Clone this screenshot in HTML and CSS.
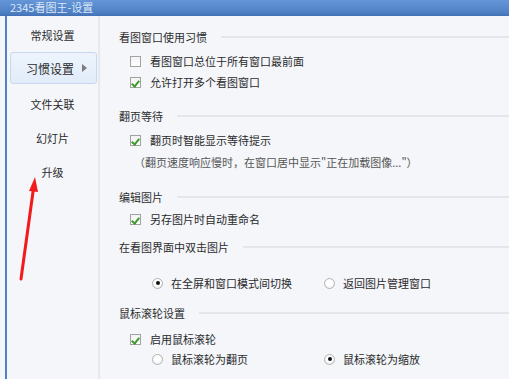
FILE: index.html
```html
<!DOCTYPE html>
<html lang="zh-CN">
<head>
<meta charset="utf-8">
<title>2345看图王-设置</title>
<link rel="stylesheet" href="styles.css">
</head>
<body>
<div class="window">
  <header class="titlebar">2345看图王-设置</header>
  <div class="main">
    <nav class="sidebar">
      <div class="nav-item">常规设置</div>
      <div class="nav-item active"><span>习惯设置</span><i class="caret"></i></div>
      <div class="nav-item gap">文件关联</div>
      <div class="nav-item">幻灯片</div>
      <div class="nav-item">升级</div>
    </nav>
    <div class="divider"></div>
    <div class="content">
      <section class="group g1">
        <div class="gtitle"><span>看图窗口使用习惯</span><i class="rule"></i></div>
        <label class="check"><i class="box"></i>看图窗口总位于所有窗口最前面</label>
        <label class="check c2"><i class="box on"></i>允许打开多个看图窗口</label>
      </section>
      <section class="group g2">
        <div class="gtitle"><span>翻页等待</span><i class="rule"></i></div>
        <label class="check"><i class="box on"></i>翻页时智能显示等待提示</label>
        <div class="note">（翻页速度响应慢时，在窗口居中显示"正在加载图像..."）</div>
      </section>
      <section class="group g3">
        <div class="gtitle"><span>编辑图片</span><i class="rule"></i></div>
        <label class="check"><i class="box on"></i>另存图片时自动重命名</label>
      </section>
      <section class="group g4">
        <div class="gtitle"><span>在看图界面中双击图片</span><i class="rule"></i></div>
        <div class="radios">
          <label class="radio"><i class="dot on"></i>在全屏和窗口模式间切换</label>
          <label class="radio"><i class="dot"></i>返回图片管理窗口</label>
        </div>
      </section>
      <section class="group g5">
        <div class="gtitle"><span>鼠标滚轮设置</span><i class="rule"></i></div>
        <label class="check"><i class="box on"></i>启用鼠标滚轮</label>
        <div class="radios r2">
          <label class="radio"><i class="dot"></i>鼠标滚轮为翻页</label>
          <label class="radio"><i class="dot on"></i>鼠标滚轮为缩放</label>
        </div>
      </section>
    </div>
  </div>
  <svg class="annotation" width="509" height="379" viewBox="0 0 509 379">
    <line x1="21" y1="279" x2="33.4" y2="189" stroke="#f21a1a" stroke-width="3" stroke-linecap="round"/>
    <polygon points="35,177 38,192 29,191" fill="#f21a1a"/>
  </svg>
</div>
</body>
</html>
```

FILE: styles.css
```css
* { box-sizing: border-box; margin: 0; padding: 0; }
html, body { width: 509px; height: 379px; overflow: hidden; }
body {
  background: #f4f6fa;
  font-family: "Noto Sans CJK SC", "Noto Sans", sans-serif;
  font-size: 11px;
  color: #2a2a2a;
}
.window { position: relative; width: 509px; height: 379px; }

.titlebar {
  height: 16px;
  padding-left: 10px;
  line-height: 14px;
  color: #dbe6f6;
  font-size: 11px;
  background: linear-gradient(#6496d8, #5384c8 70%, #4677bb);
  border-bottom: 1px solid #4372b6;
}

.main {
  display: flex;
  height: 363px;
  padding-left: 5px;
}
.sidebar {
  width: 93px;
  border-left: 2px solid #5281c4;
  padding-top: 2px;
  display: flex;
  flex-direction: column;
}
.nav-item {
  height: 34px;
  display: flex;
  align-items: center;
  justify-content: center;
  color: #2a2a2a;
}
.nav-item.active {
  height: 32px;
  margin: 0 1px 0 3px;
  padding-left: 6px;
  gap: 8px;
  font-size: 12px;
  background: linear-gradient(#edf4fd, #e1ecf9);
  border: 1px solid #c6d7ee;
  border-radius: 3px;
}
.nav-item.gap { margin-top: 3px; }
.caret {
  width: 0; height: 0;
  border-top: 4px solid transparent;
  border-bottom: 4px solid transparent;
  border-left: 5px solid #7c7c7c;
}
.divider { width: 2px; background: #e6e8ec; }

.content {
  flex: 1;
  padding: 11px 0 0 19px;
  display: flex;
  flex-direction: column;
}
.group { display: flex; flex-direction: column; }
.gtitle {
  height: 20px;
  display: flex;
  align-items: center;
  gap: 14px;
  color: #2e2e2e;
}
.rule { flex: 1; height: 2px; background: #e3e6ea; margin-top: -1px; }

.check, .radio, .note {
  height: 20px;
  display: flex;
  align-items: center;
}
.check { padding-left: 11px; gap: 9px; }
.box {
  width: 11px; height: 11px;
  border: 1px solid #a2a2a2;
  background: linear-gradient(#f2f2f2, #ffffff);
  position: relative;
  flex: none;
}
.box.on::after {
  content: "";
  position: absolute;
  left: 2px; top: 1px;
  width: 3px; height: 6px;
  border-right: 2px solid #3a9c2a;
  border-bottom: 2px solid #3a9c2a;
  transform: rotate(40deg);
}
.note { padding-left: 15px; color: #555; }

.radios {
  display: grid;
  grid-template-columns: 172px auto;
  padding-left: 33px;
}
.radio { gap: 8px; }
.dot {
  width: 11px; height: 11px;
  border-radius: 50%;
  border: 1px solid #b2b2b2;
  background: radial-gradient(circle at 50% 40%, #ffffff 40%, #e6e6e6);
  position: relative;
  flex: none;
}
.dot.on::after {
  content: "";
  position: absolute;
  left: 2.5px; top: 2.5px;
  width: 4px; height: 4px;
  border-radius: 50%;
  background: #111;
}

.g1 .check { margin-top: 4px; }
.g1 .check.c2 { margin-top: 1px; }
.g2 { margin-top: 14px; }
.g2 .check { margin-top: 4px; }
.g2 .note { margin-top: 2px; }
.g3 { margin-top: 15px; }
.g3 .check { margin-top: 2px; }
.g4 { margin-top: 8px; }
.g4 .radios { margin-top: 16px; }
.g5 { margin-top: 10px; }
.g5 .check { margin-top: 6px; }

.annotation { position: absolute; left: 0; top: 0; pointer-events: none; }
```
